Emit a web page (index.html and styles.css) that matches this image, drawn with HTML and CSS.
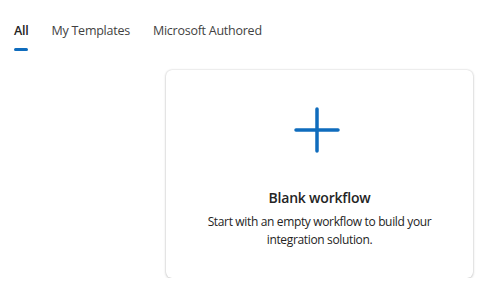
FILE: index.html
```html
<!DOCTYPE html>
<html lang="en">
	<head>
		<meta charset="UTF-8">
		<title>Templates</title>
		<link rel="stylesheet" href="styles.css">
	</head>
	<body>
		<div class="tabs">
			<button class="tab act">All</button>
			<button class="tab">My Templates</button>
			<button class="tab">Microsoft Authored</button>
		</div>

		<div class="content">
			<div class="card">
				<svg class="plus" width="48" height="48" viewBox="0 0 48 48">
					<path d="M24 3 V45 M3 24 H45" stroke="#0f6cbd" stroke-width="3.5" stroke-linecap="round" fill="none"/>
				</svg>
				<p class="card-title">Blank workflow</p>
				<p class="card-desc">Start with an empty workflow to build your integration solution.</p>
			</div>
		</div>
	</body>
</html>
```

FILE: styles.css
```css
*{
	margin: 0;
	padding: 0;
	box-sizing: border-box;
}
body{
	font-family: "Segoe UI", "Open Sans", sans-serif;
	color: #242424;
	background-color: #fff;
}

.tabs{
	display: flex;
	padding: 20px 0 0 3px;
}
.tab{
	position: relative;
	height: 31px;
	padding: 0 11px 9px;
	font-family: inherit;
	font-size: 12.5px;
	letter-spacing: -.25px;
	line-height: 22px;
	color: #424242;
	background: none;
	border: 0;
	outline: none;
	cursor: pointer;
}
.tab + .tab{
	margin-left: 1px;
}
.tab.act{
	font-weight: 600;
	color: #242424;
}
.tab.act::after{
	content: "";
	position: absolute;
	left: 11px;
	right: 11px;
	bottom: 0;
	height: 3px;
	border-radius: 2px;
	background-color: #0f6cbd;
}

.content{
	padding: 19px 0 0 166px;
}
.card{
	display: flex;
	flex-direction: column;
	align-items: center;
	width: 307px;
	height: 208px;
	padding-top: 36px;
	border-radius: 6px;
	background-color: #fff;
	box-shadow: 0 0 2px rgba(0,0,0,.2), 0 1px 3px rgba(0,0,0,.16);
}
.plus{
	margin-left: -6px;
}
.card-title{
	margin-top: 34px;
	font-size: 14px;
	font-weight: 600;
	letter-spacing: -.2px;
	line-height: 20px;
}
.card-desc{
	width: 250px;
	margin-top: 5px;
	font-size: 12px;
	letter-spacing: -.35px;
	line-height: 18px;
	text-align: center;
}
```
